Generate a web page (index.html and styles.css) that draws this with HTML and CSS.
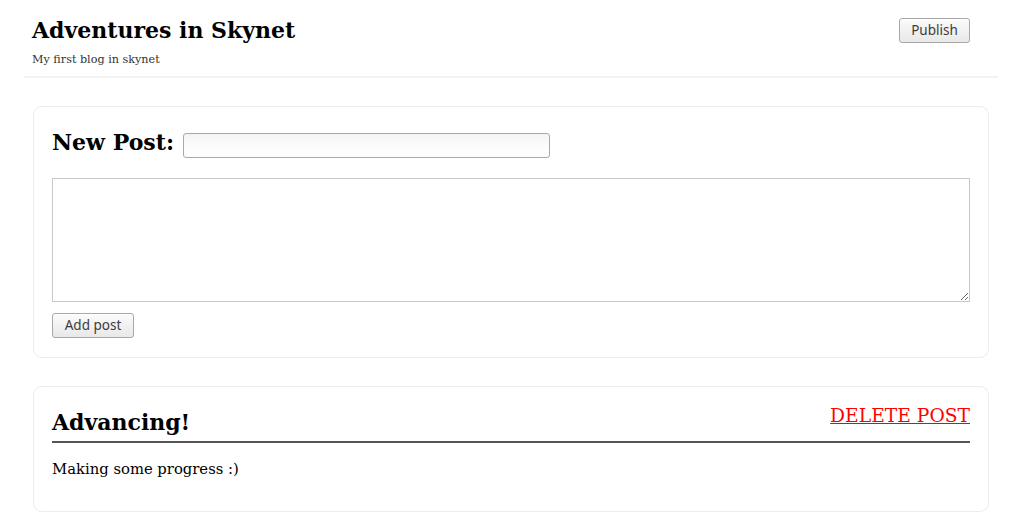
FILE: index.html
```html
<!DOCTYPE html>
<html>
<head>
<meta charset="utf-8">
<link rel="stylesheet" href="styles.css">
</head>
<body>
<header class="site-header">
  <div class="brand">
    <h1 class="site-title">Adventures in Skynet</h1>
    <p class="site-tagline">My first blog in skynet</p>
  </div>
  <button class="btn btn-publish">Publish</button>
</header>
<main class="content">
  <section class="card new-post">
    <div class="new-post-row">
      <h2 class="new-post-label">New Post:</h2>
      <input class="title-input" type="text">
    </div>
    <textarea class="body-input"></textarea>
    <button class="btn btn-add">Add post</button>
  </section>
  <article class="card post">
    <a class="delete-link" href="#">DELETE POST</a>
    <h2 class="post-title">Advancing!</h2>
    <p class="post-body">Making some progress :)</p>
  </article>
</main>
</body>
</html>
```
FILE: styles.css
```css
html, body {
  margin: 0;
  padding: 0;
  background: #ffffff;
  font-family: "DejaVu Serif", serif;
  color: #000;
}
.site-header {
  display: flex;
  justify-content: space-between;
  align-items: flex-start;
  margin: 0 26px 0 24px;
  padding: 15px 28px 9px 8px;
  border-bottom: 2px solid #f2f2f2;
}
.site-title {
  margin: 0;
  font-size: 22px;
  font-weight: bold;
  line-height: 30px;
}
.site-tagline {
  margin: 7px 0 0 0;
  font-size: 11.2px;
  line-height: 15px;
  color: #333;
}
.btn {
  font-family: "Noto Sans", "Open Sans", sans-serif;
  font-size: 13.5px;
  color: #3c3c3c;
  background: linear-gradient(#fbfbfb, #e8e8e8);
  border: 1px solid #a8a8a8;
  border-radius: 3px;
  padding: 0 11px;
  height: 25px;
  line-height: 21px;
  box-shadow: inset 0 1px 0 #fff;
}
.btn-publish {
  margin-top: 3px;
  width: 71px;
  padding: 0;
}
.content {
  padding: 28px 35px 0 33px;
  display: flex;
  flex-direction: column;
  gap: 28px;
}
.card {
  border: 1px solid #ececec;
  border-radius: 9px;
  padding: 18px 18px 19px 18px;
}
.new-post-row {
  display: flex;
  align-items: flex-start;
  gap: 9px;
  margin-top: 8px;
}
.new-post-label {
  margin: -3px 0 0 0;
  font-size: 22px;
  line-height: 24px;
}
.title-input {
  width: 367px;
  height: 25px;
  box-sizing: border-box;
  border: 1px solid #a9a9a9;
  border-radius: 3px;
  background: linear-gradient(#f4f4f4, #fdfdfd 60%);
  margin: 0;
}
.body-input {
  display: block;
  box-sizing: border-box;
  width: 100%;
  height: 124px;
  margin-top: 20px;
  border: 1px solid #c8c8c8;
  border-radius: 0;
  resize: vertical;
}
.btn-add {
  margin-top: 11px;
  width: 82px;
  padding: 0;
}
.post {
  padding-top: 16px;
  padding-bottom: 16px;
}
.delete-link {
  float: right;
  color: #ff0000;
  font-size: 18.7px;
  line-height: 24px;
  text-decoration: underline;
  margin-top: 1px;
}
.post-title {
  margin: 0;
  padding-top: 3px;
  font-size: 22px;
  line-height: 33px;
  border-bottom: 2px solid #555;
  padding-bottom: 2px;
}
.post-body {
  margin: 14px 0 14px 0;
  font-size: 14.8px;
  line-height: 24px;
}
```
